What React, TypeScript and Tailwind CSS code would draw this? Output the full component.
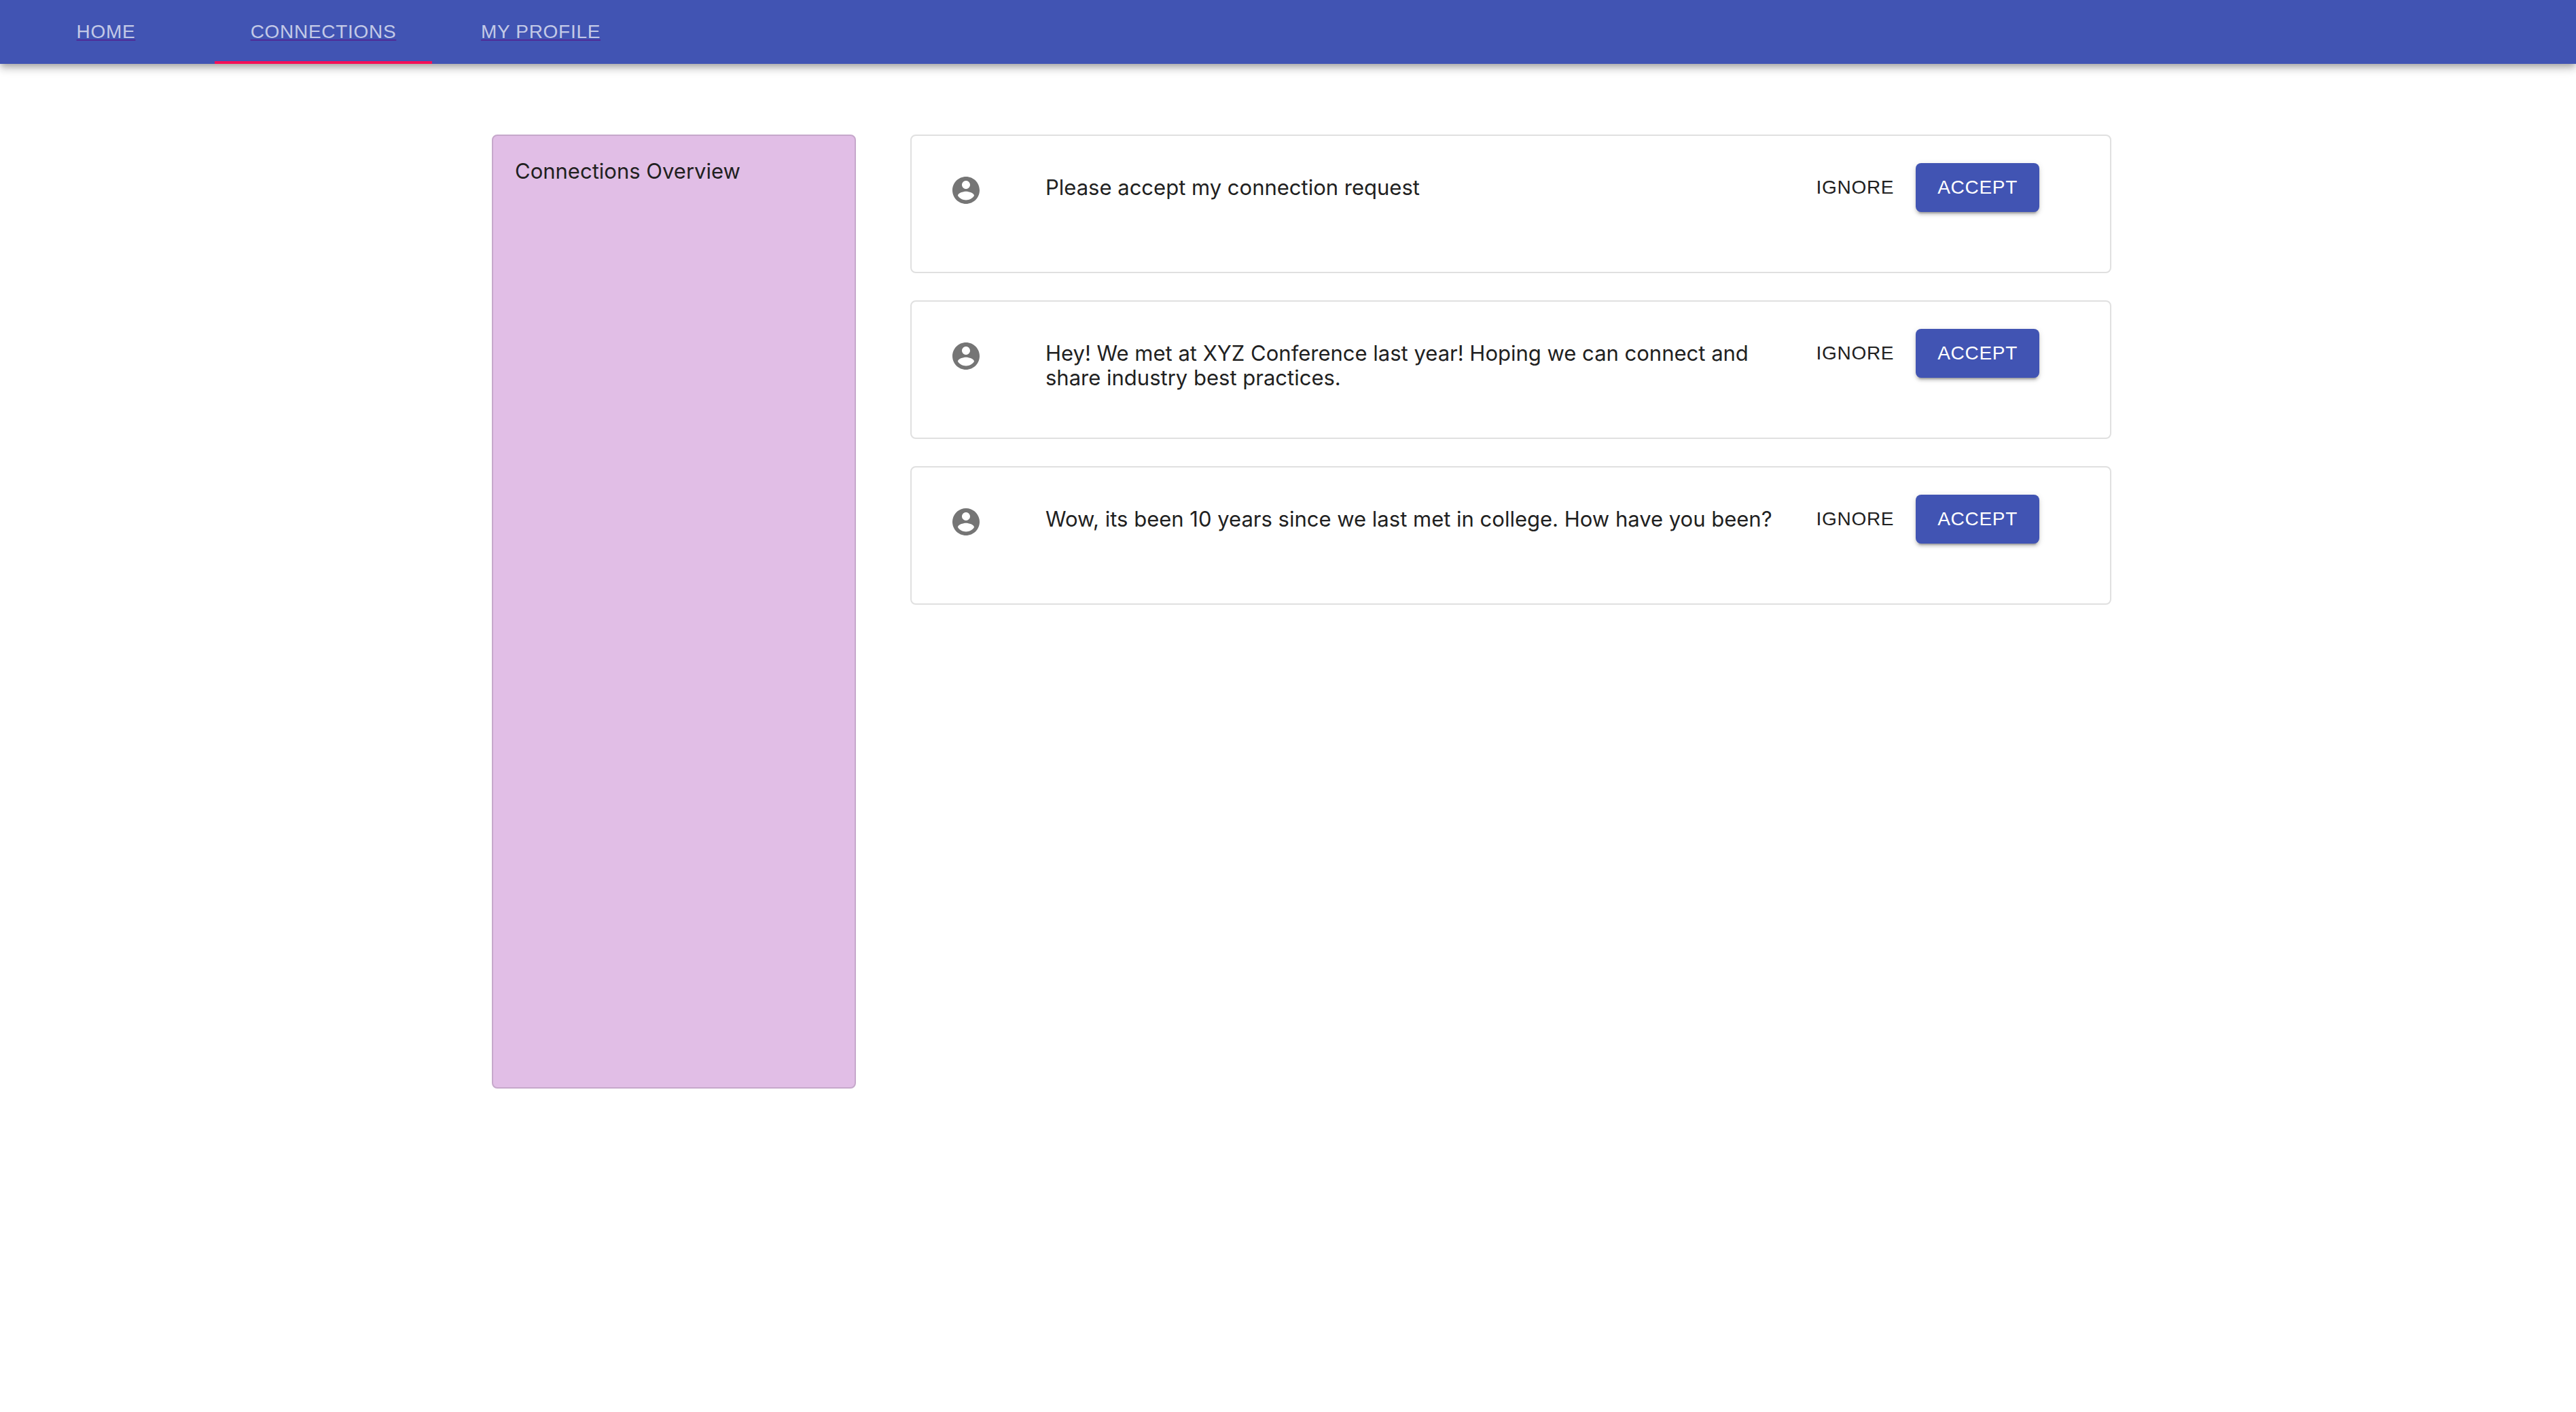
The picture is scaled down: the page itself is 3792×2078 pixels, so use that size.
const tabs = [
  { label: "HOME", href: "#home", active: false },
  { label: "CONNECTIONS", href: "#connections", active: true },
  { label: "MY PROFILE", href: "#profile", active: false },
];

const requests = [
  "Please accept my connection request",
  "Hey! We met at XYZ Conference last year! Hoping we can connect and share industry best practices.",
  "Wow, its been 10 years since we last met in college. How have you been?",
];

function AccountCircle() {
  return (
    <svg viewBox="0 0 24 24" className="mt-4 size-12 shrink-0 fill-[#757575]" aria-hidden="true">
      <path d="M12 2C6.48 2 2 6.48 2 12s4.48 10 10 10 10-4.48 10-10S17.52 2 12 2zm0 3c1.66 0 3 1.34 3 3s-1.34 3-3 3-3-1.34-3-3 1.34-3 3-3zm0 14.2c-2.5 0-4.71-1.28-6-3.22.03-1.99 4-3.08 6-3.08 1.99 0 5.97 1.09 6 3.08-1.29 1.94-3.5 3.22-6 3.22z" />
    </svg>
  );
}

function NavBar() {
  return (
    <header className="bg-[#4154b3] shadow-[0_4px_8px_-2px_rgba(0,0,0,0.2),0_8px_10px_0_rgba(0,0,0,0.14),0_2px_20px_0_rgba(0,0,0,0.12)]">
      <nav className="-ml-1 flex h-[94px] font-['Liberation_Sans',Arial,sans-serif] text-[28px] leading-8 tracking-wide">
        {tabs.map((tab) => (
          <a
            key={tab.label}
            href={tab.href}
            aria-current={tab.active ? "page" : undefined}
            className={
              tab.active
                ? "flex w-80 items-center justify-center border-b-4 border-[#f50f57] pt-1 text-white/70 underline decoration-[#551a8b]/70 decoration-2 underline-offset-2"
                : "flex w-80 items-center justify-center border-b-4 border-transparent pt-1 text-white/70 underline decoration-[#551a8b]/70 decoration-2 underline-offset-2"
            }
          >
            {tab.label}
          </a>
        ))}
      </nav>
    </header>
  );
}

function RequestCard({ message }: { message: string }) {
  return (
    <li className="flex min-h-[204px] items-start rounded-lg border-2 border-[#e0e0e0] bg-white pt-10 pr-[104px] pb-10 pl-14">
      <AccountCircle />
      <p className="mt-[18px] ml-[93px] flex-1">{message}</p>
      <div className="ml-8 flex gap-4 font-['Liberation_Sans',Arial,sans-serif] text-[28px] leading-8 tracking-wide">
        <button type="button" className="h-[72px] rounded-lg px-4">
          IGNORE
        </button>
        <button
          type="button"
          className="h-[72px] rounded-lg bg-[#4154b3] px-8 text-white shadow-[0_6px_2px_-4px_rgba(0,0,0,0.2),0_4px_4px_0_rgba(0,0,0,0.14),0_2px_10px_0_rgba(0,0,0,0.12)]"
        >
          ACCEPT
        </button>
      </div>
    </li>
  );
}

export default function App() {
  return (
    <div className="min-h-screen bg-white font-['Inter',sans-serif] text-[31px] leading-9 text-[#212121]">
      <NavBar />
      <main className="mx-auto mt-[104px] grid max-w-[2424px] grid-cols-12 items-start gap-x-20 pl-10">
        <aside className="col-span-3 min-h-[1404px] rounded-lg border-2 border-[#c6a8cb] bg-[#e1bee6] px-8 py-[34px]">
          <h2>Connections Overview</h2>
        </aside>
        <ul className="col-span-9 flex flex-col gap-10">
          {requests.map((message) => (
            <RequestCard key={message} message={message} />
          ))}
        </ul>
      </main>
    </div>
  );
}
